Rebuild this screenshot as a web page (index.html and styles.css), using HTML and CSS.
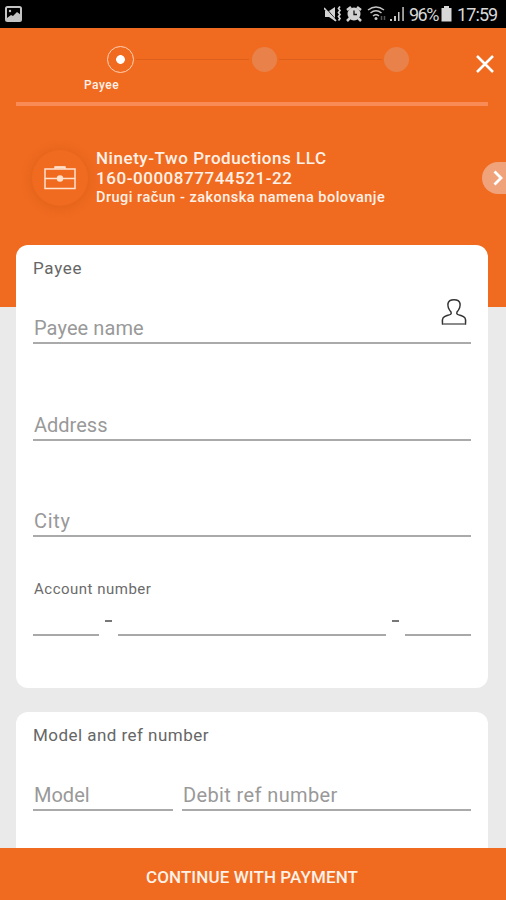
FILE: index.html
```html
<!DOCTYPE html>
<html lang="en">
<head>
<meta charset="utf-8">
<title>Payment</title>
<link rel="stylesheet" href="styles.css">
</head>
<body>
<div class="screen">
  <header class="status">
    <svg class="status-picture" width="17" height="16" viewBox="0 0 17 16"><rect x="1" y="1" width="15" height="14" rx="1.5" fill="none" stroke="#c4c4c4" stroke-width="2"/><path d="M2 12l4-3 2 1 4-4 4 3v5H2z" fill="#c4c4c4"/><circle cx="5" cy="5" r="1.2" fill="#c4c4c4"/></svg>
    <svg class="status-mute" width="18" height="18" viewBox="0 0 18 18" fill="none" stroke="#d2d2d2"><path d="M1 6h4l6-4v14l-6-4H1z" fill="#d2d2d2" stroke="none"/><path d="M1 2l12 14" stroke="#000" stroke-width="1"/><path d="M0 3l12 13M16 1.500l-1.500 2L16 5.500l-1.500 2L16 9.500l-1.500 2L16 13.500l-1.500 2" stroke-width="1.700"/></svg>
    <svg class="status-alarm" width="16" height="16" viewBox="0 0 16 16"><path d="M1 4l4-3M15 4l-4-3M4 12l-3 3M12 12l3 3" stroke="#d2d2d2" stroke-width="2.500"/><circle cx="8" cy="8" r="6.500" fill="#d2d2d2"/><path d="M8 4.500V8.500h3" fill="none" stroke="#111" stroke-width="1.300"/></svg>
    <svg class="status-wifi" width="19" height="16" viewBox="0 0 19 16" fill="none" stroke="#c6c6c6" stroke-width="1.500"><path d="M1 4q8-6 16 0M3.500 7q5.500-4.500 11 0M6 10q3-2.500 6 0"/><circle cx="9" cy="12.500" r="1.500" fill="#c6c6c6" stroke="none"/><path d="M14.500 10v4M17.500 10v4" stroke="#555"/></svg>
    <svg class="status-signal" width="16" height="16" viewBox="0 0 16 16" fill="#c6c6c6"><path d="M1 13h2v2H1zM5 10h2v5H5zM9 6h1.500v9H9zM13.300 1h1.500v14h-1.500z"/></svg>
    <span class="status-percent">96%</span>
    <svg class="status-battery" width="11" height="16" viewBox="0 0 11 16" fill="#d8d8d8"><path d="M3 0h5v2h2.500v13.500H.5V2H3z"/></svg>
    <span class="status-time">17:59</span>
  </header>

  <section class="hero">
    <div class="steps">
      <span class="step step-active"></span><span class="track track-first"></span><span class="step"></span><span class="track track-second"></span><span class="step"></span>
      <svg class="close" width="18" height="18" viewBox="0 0 18 18"><path d="M1 1l16 16M17 1L1 17" stroke="#fff" stroke-width="2.500"/></svg>
    </div>
    <div class="step-label"><span>Payee</span></div>
    <div class="divider"></div>
    <div class="account">
      <div class="account-icon">
        <svg width="32" height="24" viewBox="0 0 32 24" fill="none" stroke="#ffe0cb" stroke-width="1.500"><rect x="1" y="3" width="30" height="19.500"/><path d="M11 3V1h10v2M1 12.500h12M19 12.500h12"/><path d="M11 1.500h10" stroke-width="2"/><circle cx="16" cy="12.500" r="2.500" fill="#ffe0cb"/></svg>
      </div>
      <div class="account-text">
        <div class="account-name"><span>Ninety-Two Productions LLC</span></div>
        <div class="account-number"><span>160-0000877744521-22</span></div>
        <div class="account-type"><span>Drugi račun - zakonska namena bolovanje</span></div>
      </div>
      <div class="next"><svg width="10" height="16" viewBox="0 0 10 16"><path d="M1.500 1.500L8 8l-6.500 6.500" fill="none" stroke="#fff" stroke-width="2.800"/></svg></div>
    </div>
  </section>

  <main class="cards">
    <section class="card card-payee">
      <h2 class="title-payee"><span>Payee</span></h2>
      <div class="field field-name"><span class="ph-name">Payee name</span>
        <svg class="person" width="28" height="28" viewBox="0 0 28 28" fill="none" stroke="#333" stroke-width="1.500"><path d="M2.500 26C1.500 20 3.500 18.500 7 17.500C10 16.700 12 16.500 11 14C8.500 11 7.500 8 8 5.500C9 .5 19 .5 20 5.500C20.500 8 19.500 11 17 14C16 16.500 18 16.700 21 17.500C24.500 18.500 26.500 20 25.500 26Z"/><path d="M3 26h22" stroke="#999"/></svg>
      </div>
      <div class="field"><span class="ph-address">Address</span></div>
      <div class="field"><span class="ph-city">City</span></div>
      <div class="account-label"><span>Account number</span></div>
      <div class="parts"><div class="blank"></div><span class="dash"></span><div class="blank"></div><span class="dash"></span><div class="blank"></div></div>
    </section>
    <section class="card card-model">
      <h2 class="title-model"><span>Model and ref number</span></h2>
      <div class="pair"><div class="field"><span class="ph-model">Model</span></div><div class="field"><span class="ph-ref">Debit ref number</span></div></div>
    </section>
  </main>
  <footer class="pay"><span>CONTINUE WITH PAYMENT</span></footer>
</div>
</body>
</html>
```
FILE: styles.css
```css
* { box-sizing: border-box; }
body { margin: 0; font-family: Roboto, "Liberation Sans", sans-serif; }
svg { display: block; flex: none; }
.screen { width: 506px; height: 900px; display: flex; flex-direction: column; overflow: hidden; background: #eaeaea; }

.status { height: 28px; flex: none; background: #000; color: #d8d8d8; display: flex; align-items: center; padding: 0 8px 0 5px; font-size: 18px; }
.status-picture { margin-bottom: 1px; }
.status-mute { margin-left: auto; }
.status-alarm { margin-left: 4px; }
.status-wifi { margin-left: 5px; }
.status-signal { margin-left: 3px; }
.status-percent { margin-left: 4px; width: 30px; letter-spacing: -1.5px; white-space: nowrap; }
.status-battery { margin-left: 2px; }
.status-time { margin-left: 5px; width: 41px; letter-spacing: -.9px; white-space: nowrap; }

.hero { height: 279px; flex: none; background: #f06b20; color: #fff1e7; }
.steps { height: 62px; display: flex; align-items: center; padding-left: 107px; }
.step { width: 25px; height: 25px; border-radius: 50%; background: #e8824a; flex: none; }
.step-active { width: 27px; height: 27px; border: 1px solid #ffd0b4; background: radial-gradient(circle, #fff 0 4px, transparent 4.700px); }
.track { height: 1px; background: #dc601c; }
.track-first { width: 113px; margin: 0 3px 0 2px; }
.track-second { width: 103px; margin: 0 2px; }
.close { margin: 9px 0 0 67px; }
.step-label { height: 12px; margin: -11px 0 0 84px; line-height: 12px; font-size: 12px; font-weight: 500; letter-spacing: .5px; }
.divider { margin: 11px 18px 0 16px; height: 4px; background: #f98b57; }
.account { height: 72px; margin-top: 36px; display: flex; align-items: center; padding-left: 32px; }
.account-icon { width: 56px; height: 56px; border-radius: 50%; display: flex; align-items: center; justify-content: center; flex: none; box-shadow: 0 1px 10px 2px rgba(185, 75, 10, .25); }
.account-text { margin: -2px 0 0 8px; flex: none; font-weight: 500; white-space: nowrap; }
.account-name { height: 20px; line-height: 20px; font-size: 17px; letter-spacing: .55px; }
.account-number { height: 20px; line-height: 20px; font-size: 17px; letter-spacing: .55px; }
.account-type { height: 19px; line-height: 19px; font-size: 14.500px; letter-spacing: .48px; }
.next { margin-left: auto; width: 24px; height: 32px; border-radius: 16px 0 0 16px; background: #f0a27a; display: flex; align-items: center; padding-left: 11px; }

.cards { margin-top: -62px; padding: 0 18px 0 16px; height: 603px; overflow: hidden; flex: none; }
.card { background: #fff; border-radius: 12px; padding: 0 17px; }
.card-payee { height: 443px; }
.card-model { height: 200px; margin-top: 24px; }
h2 { margin: 0; padding-top: 12px; height: 37px; line-height: 22px; font-size: 17px; font-weight: 400; color: #666; white-space: nowrap; letter-spacing: .46px; }
.title-payee { letter-spacing: .7px; }
.field { height: 96.500px; border-bottom: 2px solid #aaa; display: flex; align-items: flex-end; padding: 0 0 3px 1px; font-size: 20px; line-height: 22px; color: #999; white-space: nowrap; }
.field-name { height: 62px; justify-content: space-between; }
.ph-name { letter-spacing: .1px; }
.ph-city { letter-spacing: .7px; }
.ph-ref { letter-spacing: .38px; }
.person { margin: 0 3px 13px 0; }
.account-label { height: 20px; margin-top: 42px; padding-left: 1px; font-size: 15px; line-height: 20px; color: #6b6b6b; letter-spacing: .5px; }
.parts { height: 37px; display: grid; grid-template-columns: 66px 7px 268px 7px 66px; justify-content: space-between; align-items: end; }
.blank { height: 2px; background: #a8a8a8; }
.dash { height: 2px; background: #777; margin-bottom: 14px; }
.card-model .pair { margin-top: 0; }
.pair { display: grid; grid-template-columns: 140px 1fr; gap: 9px; }
.pair .field { height: 62px; }
.pay { height: 52px; flex: none; background: #f06b20; color: #fff1e7; display: flex; align-items: center; justify-content: center; padding: 6px 2px 0 0; font-size: 17px; font-weight: 500; letter-spacing: .1px; white-space: nowrap; }
```
